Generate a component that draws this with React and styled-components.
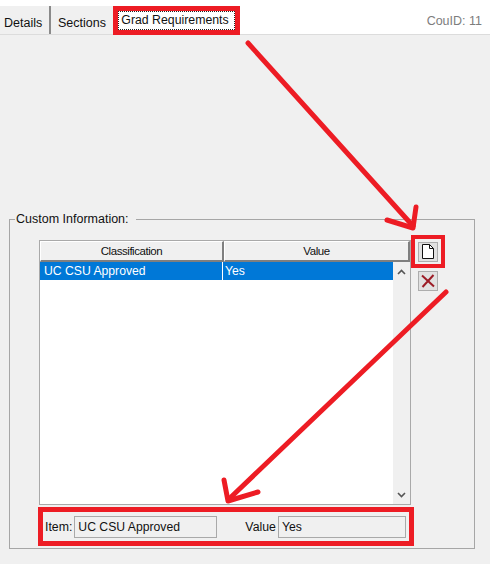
import React from "react";
import styled, { createGlobalStyle } from "styled-components";

const RED = "#ed1c24";

const GlobalStyle = createGlobalStyle`
  html, body {
    margin: 0;
    padding: 0;
    background: #f0f0f0;
  }
  body {
    font-family: "Liberation Sans", Arial, sans-serif;
    font-size: 12px;
    color: #111;
  }
`;

const Page = styled.div`
  position: relative;
  width: 490px;
  height: 564px;
  overflow: hidden;
  background: #f0f0f0;
`;

const TabBar = styled.div`
  display: flex;
  align-items: stretch;
  height: 34px;
  padding-right: 8px;
  background: #fff;
  border-bottom: 1px solid #dcdcdc;
`;

const Tab = styled.div`
  display: flex;
  align-items: center;
  box-sizing: border-box;
  width: ${(p) => p.$width}px;
  margin-top: 6px;
  height: 28px;
  padding-left: ${(p) => p.$pad}px;
  padding-top: 5px;
  background: #f0f0f0;
  border-right: ${(p) => (p.$edge ? "2px solid #8a8a8a" : "none")};
  font-size: 12.5px;
  white-space: nowrap;
`;

const ActiveTab = styled.div`
  box-sizing: border-box;
  width: 127px;
  height: 29px;
  margin-top: 6px;
  background: #fff;
  border: 5px solid ${RED};
  display: flex;
`;

const FocusLabel = styled.span`
  flex: 1;
  display: flex;
  align-items: center;
  justify-content: center;
  padding: 0 3px 1px 0;
  outline: 1px dotted #222;
  outline-offset: -1px;
  font-size: 12.3px;
  white-space: nowrap;
`;

const CourseId = styled.div`
  margin-left: auto;
  align-self: center;
  margin-top: 7px;
  color: #7d7d7d;
  font-size: 12.5px;
`;

const Body = styled.div`
  padding: 177px 17px 0 9px;
`;

const Group = styled.fieldset`
  box-sizing: border-box;
  height: 337px;
  margin: 0;
  padding: 14px 29px 0;
  border: 1px solid #a6a6a6;
`;

const GroupTitle = styled.legend`
  margin-left: -24px;
  padding: 0 7px 0 1px;
  font-size: 12.5px;
  line-height: 14px;
`;

const GridRow = styled.div`
  display: flex;
  align-items: flex-start;
`;

const Table = styled.div`
  box-sizing: border-box;
  width: 372px;
  height: 265px;
  border: 1px solid #a9a9a9;
  background: #fff;
  display: flex;
  flex-direction: column;
`;

const HeaderRow = styled.div`
  display: grid;
  grid-template-columns: 184px 1fr;
  height: 21px;
  flex: none;
`;

const HeaderCell = styled.div`
  display: flex;
  align-items: center;
  justify-content: center;
  background: #f0f0f0;
  border-top: 1px solid #fff;
  border-left: 1px solid #fff;
  border-right: 2px solid #7f7f7f;
  border-bottom: 2px solid #7f7f7f;
  font-size: 11.5px;
  letter-spacing: -0.45px;
`;

const TableBody = styled.div`
  flex: 1;
  display: flex;
  min-height: 0;
`;

const Rows = styled.div`
  flex: 1;
`;

const SelectedRow = styled.div`
  display: grid;
  grid-template-columns: 183px 1fr;
  height: 18px;
  background: #0078d7;
  color: #fff;
  font-size: 12.2px;
`;

const Cell = styled.div`
  display: flex;
  align-items: center;
  padding-left: ${(p) => (p.$divider ? 4 : 2)}px;
  border-right: ${(p) => (p.$divider ? "1px solid #fff" : "none")};
`;

const Scrollbar = styled.div`
  width: 17px;
  display: flex;
  flex-direction: column;
  justify-content: space-between;
  align-items: center;
  padding: 7px 0 6px;
  background: #f0f0f0;
  box-sizing: border-box;
`;

const Side = styled.div`
  display: flex;
  flex-direction: column;
  align-items: center;
  width: 34px;
  margin-top: -5px;
  gap: 3px;
`;

const NewFrame = styled.div`
  box-sizing: border-box;
  width: 34px;
  height: 33px;
  border: 4px solid ${RED};
  display: flex;
  align-items: center;
  justify-content: center;
`;

const IconButton = styled.div`
  box-sizing: border-box;
  width: 20px;
  height: 20px;
  display: flex;
  align-items: center;
  justify-content: center;
  background: #e1e1e1;
  border: 1px solid #adadad;
`;

const DetailBar = styled.div`
  box-sizing: border-box;
  display: flex;
  align-items: center;
  width: 376px;
  height: 39px;
  margin: 2px 0 0 -1px;
  padding: 0 2px;
  border: 5px solid ${RED};
`;

const FieldLabel = styled.span`
  font-size: 12.3px;
  margin-right: ${(p) => p.$gap}px;
`;

const FieldValue = styled.div`
  box-sizing: border-box;
  width: ${(p) => p.$width}px;
  height: 22px;
  margin-right: ${(p) => p.$gap || 0}px;
  padding-left: 3px;
  display: flex;
  align-items: center;
  background: #f0f0f0;
  border: 1px solid #a9a9a9;
  font-size: 12.2px;
`;

const Arrows = styled.svg`
  position: absolute;
  inset: 0;
  pointer-events: none;
`;

export default function App() {
  return (
    <Page>
      <GlobalStyle />
      <TabBar>
        <Tab $width={51} $pad={4} $edge>Details</Tab>
        <Tab $width={62} $pad={7}>Sections</Tab>
        <ActiveTab>
          <FocusLabel>Grad Requirements</FocusLabel>
        </ActiveTab>
        <CourseId>CouID: 11</CourseId>
      </TabBar>
      <Body>
        <Group>
          <GroupTitle>Custom Information:</GroupTitle>
          <GridRow>
            <Table>
              <HeaderRow>
                <HeaderCell>Classification</HeaderCell>
                <HeaderCell>Value</HeaderCell>
              </HeaderRow>
              <TableBody>
                <Rows>
                  <SelectedRow>
                    <Cell $divider>UC CSU Approved</Cell>
                    <Cell>Yes</Cell>
                  </SelectedRow>
                </Rows>
                <Scrollbar>
                  <svg width="9" height="6" viewBox="0 0 9 6">
                    <path d="M1 5 L4.5 1.5 L8 5" fill="none" stroke="#555" strokeWidth="1.6" />
                  </svg>
                  <svg width="9" height="6" viewBox="0 0 9 6">
                    <path d="M1 1 L4.5 4.5 L8 1" fill="none" stroke="#555" strokeWidth="1.6" />
                  </svg>
                </Scrollbar>
              </TableBody>
            </Table>
            <Side>
              <NewFrame>
                <IconButton>
                  <svg width="12" height="15" viewBox="0 0 12 15">
                    <path d="M0.5 0.5 H7.5 L11.5 4.5 V14.5 H0.5 Z" fill="#fff" stroke="#111" />
                    <path d="M7.5 0.5 V4.5 H11.5" fill="none" stroke="#111" />
                  </svg>
                </IconButton>
              </NewFrame>
              <IconButton>
                <svg width="14" height="14" viewBox="0 0 14 14">
                  <path d="M1 1.5 L13 12.5 M12.5 1 L1.5 13" stroke="#9c1c26" strokeWidth="2" fill="none" />
                </svg>
              </IconButton>
            </Side>
          </GridRow>
          <DetailBar>
            <FieldLabel $gap={2}>Item:</FieldLabel>
            <FieldValue $width={143} $gap={28}>UC CSU Approved</FieldValue>
            <FieldLabel $gap={2}>Value</FieldLabel>
            <FieldValue $width={128}>Yes</FieldValue>
          </DetailBar>
        </Group>
      </Body>
      <Arrows width="490" height="564" viewBox="0 0 490 564">
        <g fill="none" stroke={RED} strokeWidth="5" strokeLinecap="round" strokeLinejoin="round">
          <path d="M248 43 L413 226" />
          <path d="M387 220 L413 228 L416 207" />
          <path d="M446 292 L229 499" />
          <path d="M224 480 L228 501 L258 492" />
        </g>
      </Arrows>
    </Page>
  );
}
